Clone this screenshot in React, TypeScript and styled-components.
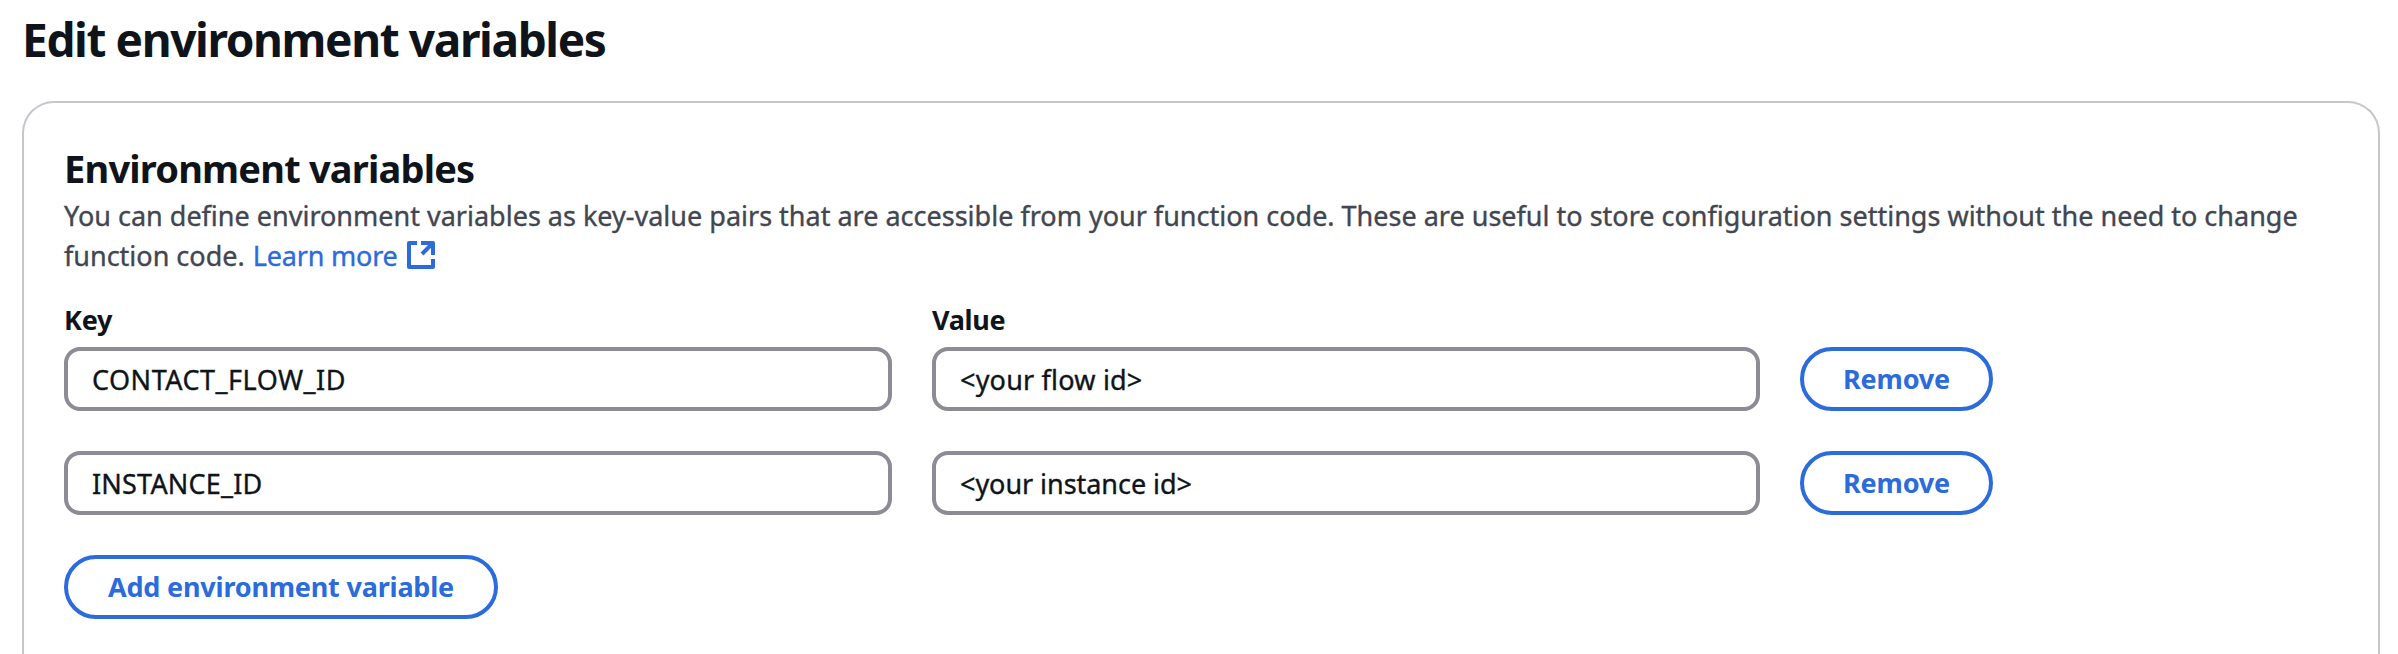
import React, { useState } from 'react';
import styled, { createGlobalStyle } from 'styled-components';

const GlobalStyle = createGlobalStyle`
  * { box-sizing: border-box; }
  html, body { margin: 0; height: 100%; background: #fff; }
  body {
    color: #0f141a;
    font-family: "Noto Sans", "Open Sans", sans-serif;
    font-size: 27px;
    line-height: 40px;
  }
`;

const Page = styled.main`
  display: flex;
  flex-direction: column;
  gap: 32px;
  height: 100vh;
  padding: 9px 18px 0 22px;
`;

const Title = styled.h1`
  margin: 0;
  font-size: 46px;
  line-height: 60px;
  font-weight: 700;
  letter-spacing: -1.38px;
`;

const Card = styled.section`
  flex: 1;
  min-height: 0;
  padding: 41px 40px 0;
  border: 2px solid #c6c6cd;
  border-bottom: 0;
  border-radius: 32px 32px 0 0;
`;

const CardTitle = styled.h2`
  margin: 0 0 4px;
  font-size: 38px;
  line-height: 48px;
  font-weight: 700;
  letter-spacing: -0.8px;
`;

const Description = styled.p`
  margin: 0;
  color: #424650;
  -webkit-text-stroke: 0.35px currentColor;
`;

const Link = styled.a`
  margin-left: 1px;
  color: #2b6bdb;
  text-decoration: none;
  letter-spacing: -0.2px;
`;

const ExternalIcon = styled.svg`
  width: 32px;
  height: 32px;
  margin-left: 7px;
  vertical-align: -5px;
  fill: none;
  stroke: currentColor;
  stroke-width: 4;
  stroke-linejoin: round;
`;

const Fields = styled.div`
  display: grid;
  grid-template-columns: 828px 828px auto;
  justify-content: start;
  column-gap: 40px;
  margin-top: 24px;
`;

const Label = styled.div`
  height: 47px;
  font-weight: 700;
  letter-spacing: -0.3px;
`;

const Input = styled.input<{ $tracking?: number }>`
  width: 100%;
  height: 64px;
  margin-bottom: 40px;
  padding: 0 24px;
  border: 4px solid #8c8c94;
  border-radius: 16px;
  background: #fff;
  color: inherit;
  font: inherit;
  letter-spacing: ${(p) => p.$tracking ?? 0}px;
  -webkit-text-stroke: 0.35px currentColor;
  outline: none;
`;

const Button = styled.button<{ $width: number }>`
  width: ${(p) => p.$width}px;
  height: 64px;
  padding: 0;
  border: 4px solid #2b6bdb;
  border-radius: 32px;
  background: #fff;
  color: #2b6bdb;
  font: inherit;
  font-weight: 700;
  letter-spacing: -0.2px;
`;

const initial = [
  { key: 'CONTACT_FLOW_ID', value: '<your flow id>', keyTracking: 0.5, valueTracking: 0.2 },
  { key: 'INSTANCE_ID', value: '<your instance id>', keyTracking: 0.2, valueTracking: -0.05 },
];

export default function App() {
  const [rows] = useState(initial);
  return (
    <>
      <GlobalStyle />
      <Page>
        <Title>Edit environment variables</Title>
        <Card>
          <CardTitle>Environment variables</CardTitle>
          <Description>
            You can define environment variables as key-value pairs that are accessible from your function code. These
            are useful to store configuration settings without the need to change
            <br />
            function code.{' '}
            <Link>
              Learn more
              <ExternalIcon viewBox="0 0 32 32" aria-hidden="true">
                <path d="M12 4H4v24h24v-8" />
                <path d="M16 4h12v12M28 4L17 15" />
              </ExternalIcon>
            </Link>
          </Description>
          <Fields>
            <Label>Key</Label>
            <Label>Value</Label>
            <span />
            {rows.map((row) => (
              <React.Fragment key={row.key}>
                <Input defaultValue={row.key} $tracking={row.keyTracking} aria-label="Key" spellCheck={false} />
                <Input defaultValue={row.value} $tracking={row.valueTracking} aria-label="Value" spellCheck={false} />
                <Button $width={193}>Remove</Button>
              </React.Fragment>
            ))}
          </Fields>
          <Button $width={434}>Add environment variable</Button>
        </Card>
      </Page>
    </>
  );
}
